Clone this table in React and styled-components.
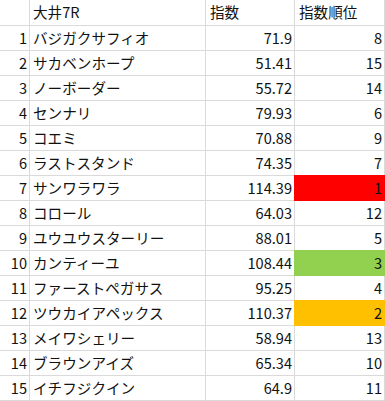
import React from 'react';
import styled, { createGlobalStyle } from 'styled-components';

const GlobalStyle = createGlobalStyle`
  html, body {
    margin: 0;
    padding: 0;
    background: #ffffff;
  }
`;

const Sheet = styled.div`
  display: grid;
  grid-template-columns: 29px 175px 88px 89px;
  grid-template-rows: 25px;
  grid-auto-rows: 24px;
  gap: 1px;
  padding: 0 1px 1px 0;
  width: 385px;
  box-sizing: border-box;
  background: #dadada;
  font-family: "Noto Sans CJK JP", "Noto Sans", sans-serif;
  font-size: 14.6px;
  color: #111;
`;

const Cell = styled.div`
  display: flex;
  align-items: center;
  justify-content: ${({ align }) => (align === 'right' ? 'flex-end' : 'flex-start')};
  padding: ${({ align }) => (align === 'right' ? '0 2px 0 0' : '0 0 0 3px')};
  background: ${({ fill }) => fill || '#ffffff'};
  outline: ${({ fill }) => (fill ? `1px solid ${fill}` : 'none')};
  white-space: nowrap;
  overflow: hidden;
  line-height: 1;
`;

const HeadCell = styled(Cell)`
  padding-left: 4px;
`;

const rows = [
  ['バジガクサフィオ', '71.9', 8],
  ['サカベンホープ', '51.41', 15],
  ['ノーボーダー', '55.72', 14],
  ['センナリ', '79.93', 6],
  ['コエミ', '70.88', 9],
  ['ラストスタンド', '74.35', 7],
  ['サンワラワラ', '114.39', 1],
  ['コロール', '64.03', 12],
  ['ユウユウスターリー', '88.01', 5],
  ['カンティーユ', '108.44', 3],
  ['ファーストペガサス', '95.25', 4],
  ['ツウカイアペックス', '110.37', 2],
  ['メイワシェリー', '58.94', 13],
  ['ブラウンアイズ', '65.34', 10],
  ['イチフジクイン', '64.9', 11],
];

const rankFill = { 1: '#ff0000', 2: '#ffc000', 3: '#92d050' };

export default function App() {
  return (
    <>
      <GlobalStyle />
      <Sheet>
        <Cell />
        <Cell>大井7R</Cell>
        <HeadCell>指数</HeadCell>
        <HeadCell>指数順位</HeadCell>
        {rows.map(([name, score, rank], i) => (
          <React.Fragment key={name}>
            <Cell align="right">{i + 1}</Cell>
            <Cell>{name}</Cell>
            <Cell align="right">{score}</Cell>
            <Cell align="right" fill={rankFill[rank]}>{rank}</Cell>
          </React.Fragment>
        ))}
      </Sheet>
    </>
  );
}
